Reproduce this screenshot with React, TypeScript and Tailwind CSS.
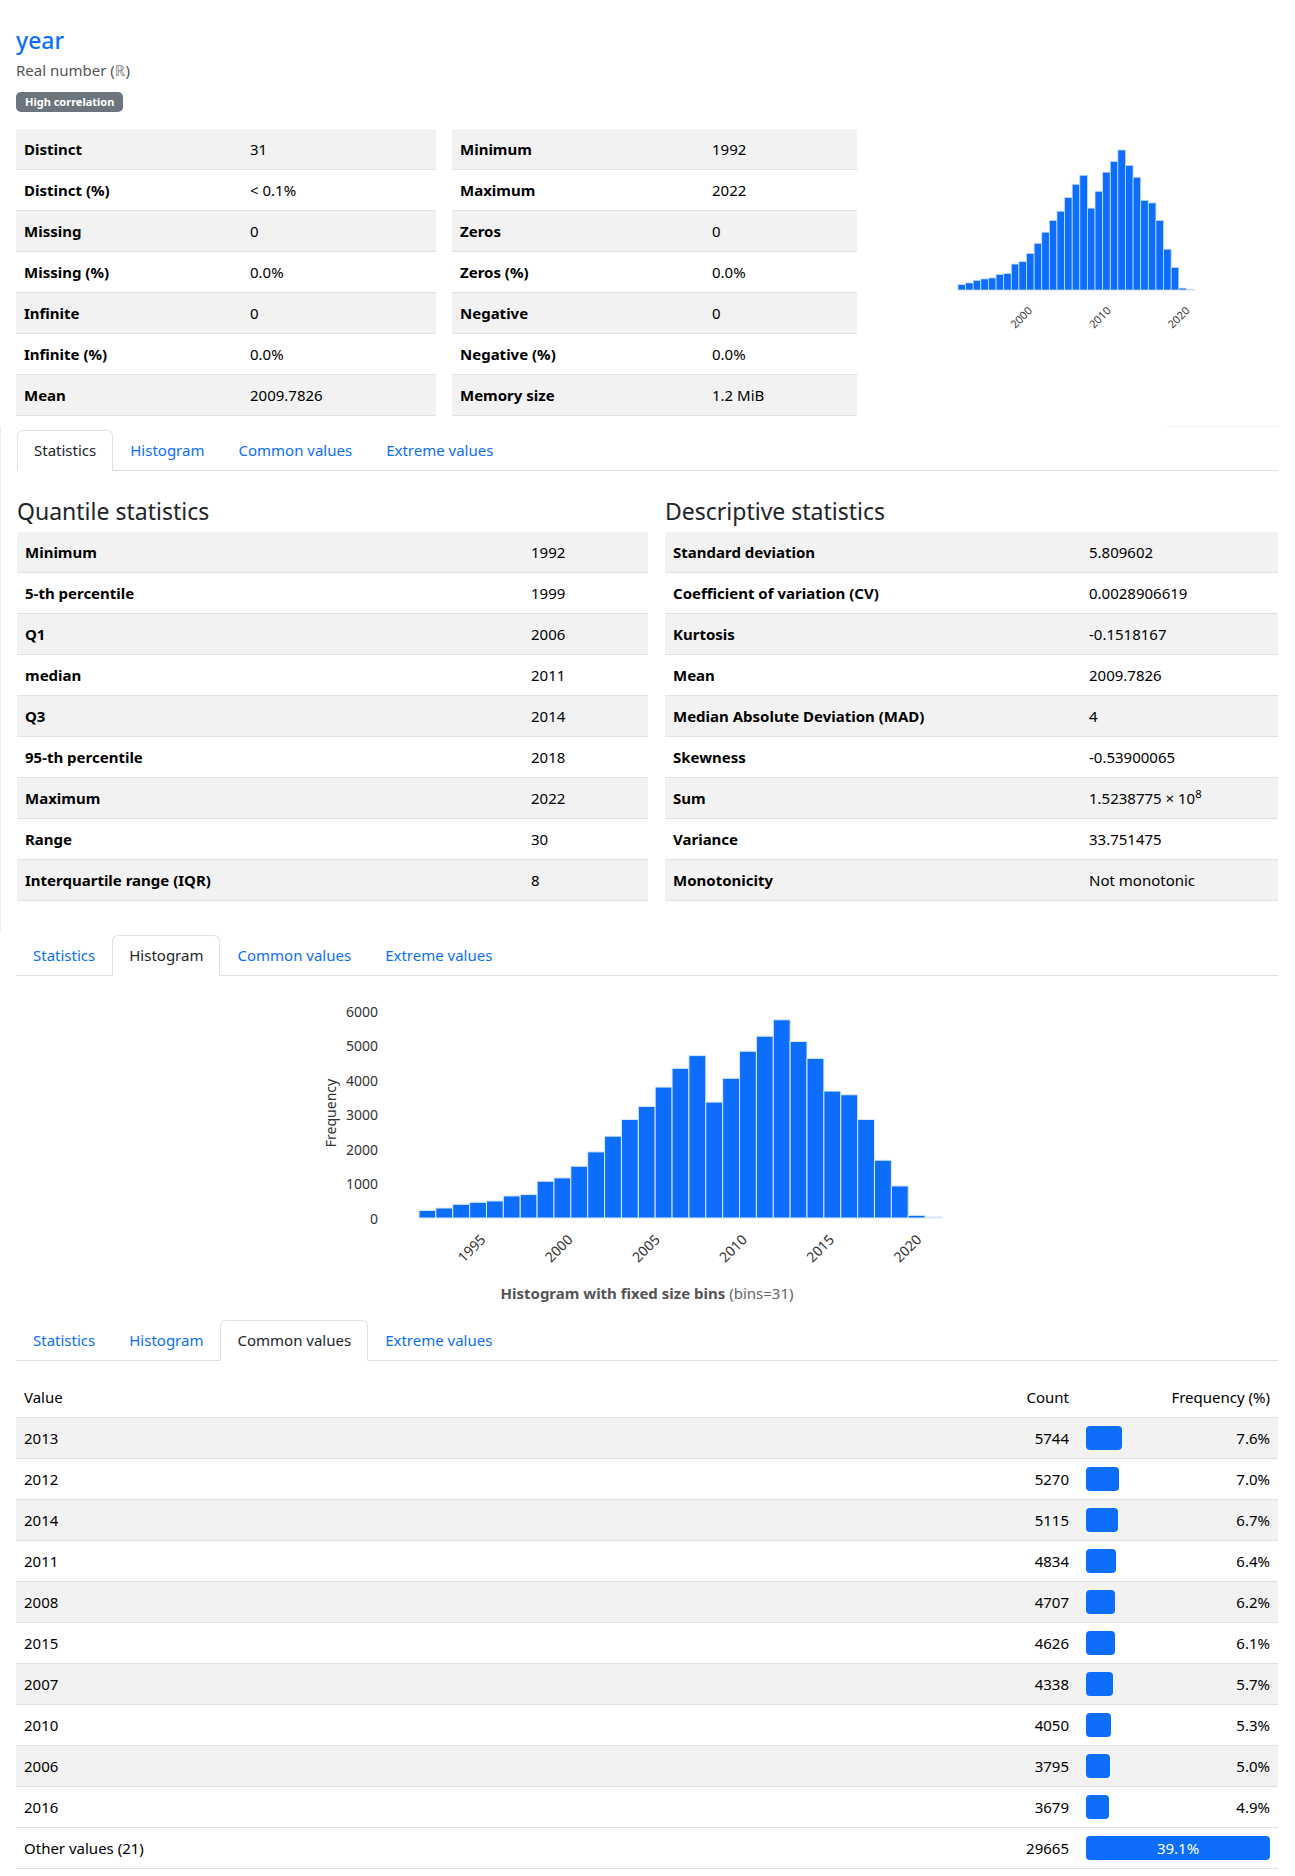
import React from 'react';

// counts per year, 1992 .. 2022 (31 bins)
const hist = [
  220, 290, 397, 455, 494, 639, 678, 1065, 1162, 1500, 1917, 2372, 2856, 3233, 3795, 4338,
  4707, 3359, 4050, 4834, 5270, 5744, 5115, 4626, 3679, 3572, 2856, 1675, 929, 77, 30,
];

const overview1: [string, string][] = [
  ['Distinct', '31'],
  ['Distinct (%)', '< 0.1%'],
  ['Missing', '0'],
  ['Missing (%)', '0.0%'],
  ['Infinite', '0'],
  ['Infinite (%)', '0.0%'],
  ['Mean', '2009.7826'],
];

const overview2: [string, string][] = [
  ['Minimum', '1992'],
  ['Maximum', '2022'],
  ['Zeros', '0'],
  ['Zeros (%)', '0.0%'],
  ['Negative', '0'],
  ['Negative (%)', '0.0%'],
  ['Memory size', '1.2 MiB'],
];

const quantiles: [string, string][] = [
  ['Minimum', '1992'],
  ['5-th percentile', '1999'],
  ['Q1', '2006'],
  ['median', '2011'],
  ['Q3', '2014'],
  ['95-th percentile', '2018'],
  ['Maximum', '2022'],
  ['Range', '30'],
  ['Interquartile range (IQR)', '8'],
];

const descriptive: [string, React.ReactNode][] = [
  ['Standard deviation', '5.809602'],
  ['Coefficient of variation (CV)', '0.0028906619'],
  ['Kurtosis', '-0.1518167'],
  ['Mean', '2009.7826'],
  ['Median Absolute Deviation (MAD)', '4'],
  ['Skewness', '-0.53900065'],
  ['Sum', <>1.5238775 × 10<sup>8</sup></>],
  ['Variance', '33.751475'],
  ['Monotonicity', 'Not monotonic'],
];

const common: [string, number, number][] = [
  ['2013', 5744, 7.6],
  ['2012', 5270, 7.0],
  ['2014', 5115, 6.7],
  ['2011', 4834, 6.4],
  ['2008', 4707, 6.2],
  ['2015', 4626, 6.1],
  ['2007', 4338, 5.7],
  ['2010', 4050, 5.3],
  ['2006', 3795, 5.0],
  ['2016', 3679, 4.9],
];

function StatTable({ rows, labelClass, className }: { rows: [string, React.ReactNode][]; labelClass: string; className: string }) {
  return (
    <div className={className}>
      {rows.map(([k, v], i) => (
        <div key={k} className={`flex h-[41px] items-center border-b border-[#dee2e6] ${i % 2 === 0 ? 'bg-[#f2f2f2]' : 'bg-white'}`}>
          <div className={`${labelClass} shrink-0 pl-2 font-bold text-black`}>{k}</div>
          <div className="flex-1 text-black">{v}</div>
        </div>
      ))}
    </div>
  );
}

function Tabs({ active, className }: { active: number; className?: string }) {
  const names = ['Statistics', 'Histogram', 'Common values', 'Extreme values'];
  return (
    <div className={`flex border-b border-[#dee2e6] ${className ?? ''}`}>
      {names.map((n, i) =>
        i === active ? (
          <div key={n} className="-mb-px h-[41px] rounded-t-md border border-[#dee2e6] border-b-white bg-white px-4 leading-[38px] text-[#212529]">
            {n}
          </div>
        ) : (
          <div key={n} className="h-10 border border-transparent px-4 leading-[38px] text-[#0d6efd]">
            {n}
          </div>
        )
      )}
    </div>
  );
}

function MiniHistogram() {
  const x0 = 17, bw = 7.613, base = 161, k = 140 / 5744;
  return (
    <svg width="270" height="210" className="mx-auto block">
      {hist.map((c, i) => (
        <rect key={i} x={x0 + i * bw} y={base - c * k} width={bw} height={Math.max(c * k, 0.6)} fill="#0d6efd" stroke="#c6dbff" strokeWidth={0.8} />
      ))}
      {[2000, 2010, 2020].map(y => {
        const tx = x0 + (y - 1992) * bw * 31 / 30;
        return (
          <text key={y} transform={`translate(${tx},188) rotate(-45)`} textAnchor="middle" dominantBaseline="central" fontSize={11} fill="#333">
            {y}
          </text>
        );
      })}
    </svg>
  );
}

function BigHistogram() {
  const x0 = 102, bw = 16.87, base = 233, k = 0.0345;
  return (
    <svg width="660" height="297" className="mx-auto block">
      {hist.map((c, i) => (
        <rect key={i} x={x0 + i * bw} y={base - c * k} width={bw} height={Math.max(c * k, 0.8)} fill="#0d6efd" stroke="#dbe8ff" strokeWidth={1} />
      ))}
      {[0, 1000, 2000, 3000, 4000, 5000, 6000].map(v => (
        <text key={v} x={61} y={base - v * k} textAnchor="end" dominantBaseline="central" fontSize={14} fill="#333">
          {v}
        </text>
      ))}
      <text transform="translate(13,128) rotate(-90)" textAnchor="middle" dominantBaseline="central" fontSize={14} fill="#333">
        Frequency
      </text>
      {[1995, 2000, 2005, 2010, 2015, 2020].map(y => {
        const tx = x0 + (y - 1992) * bw * 31 / 30;
        return (
          <text key={y} transform={`translate(${tx},263) rotate(-45)`} textAnchor="middle" dominantBaseline="central" fontSize={14} fill="#333">
            {y}
          </text>
        );
      })}
    </svg>
  );
}

export default function App() {
  return (
    <div className="min-h-screen bg-white font-['Noto_Sans','DejaVu_Sans',sans-serif] text-[15px] text-[#212529]">
      <div className="pl-4 pr-[17px] pt-[26px] pb-[7px]">
        <div className="text-[23px] font-medium leading-[28px] text-[#0d6efd]">year</div>
        <div className="mt-[5px] leading-[22px] text-[#555]">
          Real number (<span className="text-[#888]">ℝ</span>)
        </div>
        <div className="mt-[11px] flex">
          <span className="flex h-5 items-center rounded-[5px] bg-[#6c757d] px-[9px] text-[11px] font-bold text-white">High correlation</span>
        </div>

        <div className="mt-[17px] flex gap-4">
          <StatTable rows={overview1} className="w-[420px]" labelClass="w-[234px]" />
          <StatTable rows={overview2} className="w-[405px]" labelClass="w-[260px]" />
          <div className="flex-1">
            <MiniHistogram />
          </div>
        </div>

        {/* statistics tab */}
        <div className="-ml-4 mt-[10px] border-l border-[#ececec] pl-4 pt-1">
          <div className="ml-auto -mt-1 mb-[3px] h-px w-[111px] bg-[#f0f0f0]" />
          <Tabs active={0} />
          <div className="mt-[26px] flex gap-[17px]">
            <div className="w-[631px]">
              <h4 className="mb-[7px] text-[23px] leading-[28px] text-[#212529]">Quantile statistics</h4>
              <StatTable rows={quantiles} className="" labelClass="w-[514px]" />
            </div>
            <div className="flex-1">
              <h4 className="mb-[7px] text-[23px] leading-[28px] text-[#212529]">Descriptive statistics</h4>
              <StatTable rows={descriptive} className="" labelClass="w-[424px]" />
            </div>
          </div>
          <div className="h-[30px]" />
        </div>

        {/* histogram tab */}
        <Tabs active={1} className="mt-[4px]" />
        <div className="mt-[9px]">
          <BigHistogram />
          <div className="text-center text-[15px] leading-[22px] text-[#666]">
            <span className="font-bold text-[#555]">Histogram with fixed size bins</span> (bins=31)
          </div>
        </div>

        {/* common values tab */}
        <Tabs active={2} className="mt-4" />
        <div className="mt-4">
          <div className="flex h-[41px] items-center border-b border-[#dee2e6] text-black">
            <div className="flex-1 pl-2">Value</div>
            <div className="pr-2 text-right">Count</div>
            <div className="w-[201px] pl-[9px] pr-2 text-right">Frequency (%)</div>
          </div>
          {common.map(([v, c, p], i) => (
            <div key={v} className={`flex h-[41px] items-center border-b border-[#dee2e6] text-black ${i % 2 === 0 ? 'bg-[#f2f2f2]' : 'bg-white'}`}>
              <div className="flex-1 pl-2">{v}</div>
              <div className="pr-2 text-right">{c}</div>
              <div className="flex w-[201px] items-center pl-[9px] pr-2">
                <div className="h-6 rounded bg-[#0d6efd]" style={{ width: `${(p / 39.1) * 184}px` }} />
                <div className="flex-1 text-right">{p.toFixed(1)}%</div>
              </div>
            </div>
          ))}
          <div className="flex h-[41px] items-center border-b border-[#dee2e6] bg-white text-black">
            <div className="flex-1 pl-2">Other values (21)</div>
            <div className="pr-2 text-right">29665</div>
            <div className="flex w-[201px] items-center pl-[9px] pr-2">
              <div className="flex h-6 w-full items-center justify-center rounded bg-[#0d6efd] text-white">39.1%</div>
            </div>
          </div>
        </div>
      </div>
    </div>
  );
}
